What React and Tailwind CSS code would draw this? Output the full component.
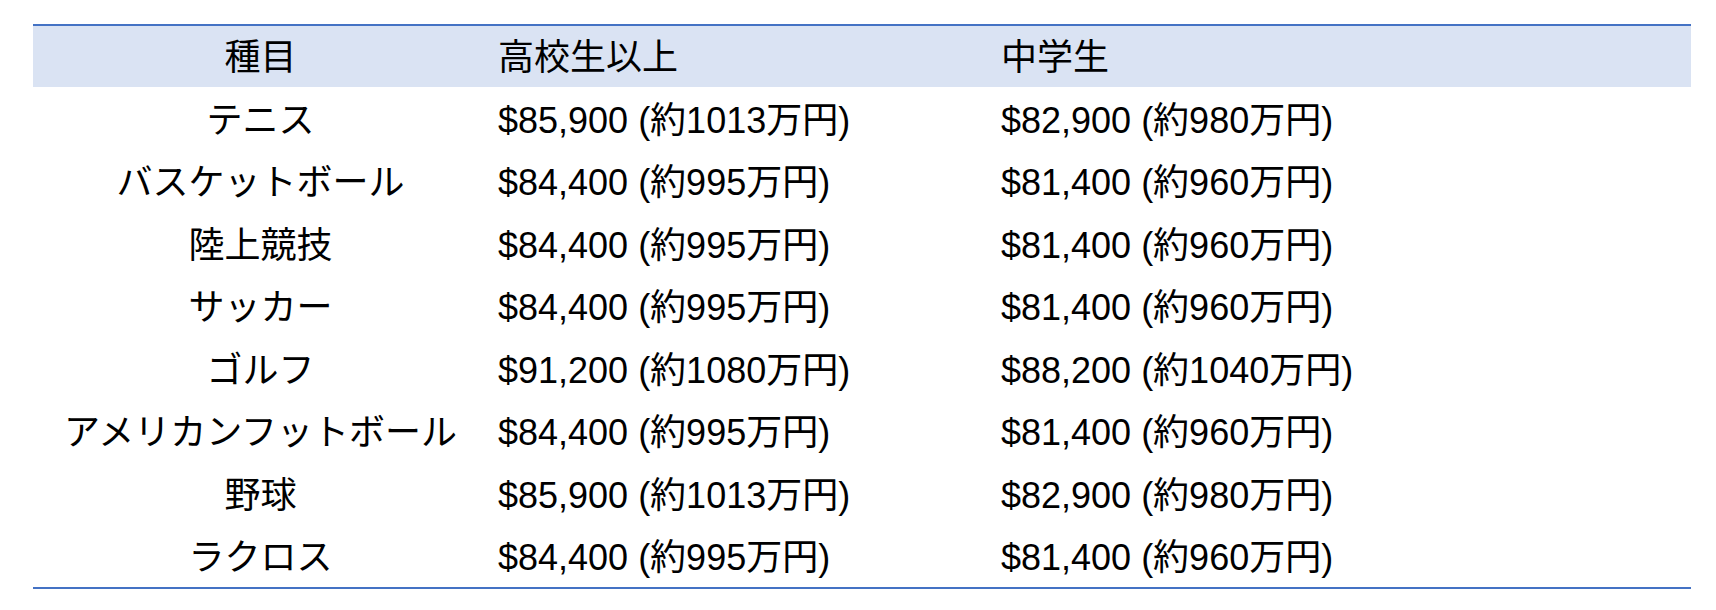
import React from "react";

const rows = [
  ["テニス", "$85,900 (約1013万円)", "$82,900 (約980万円)"],
  ["バスケットボール", "$84,400 (約995万円)", "$81,400 (約960万円)"],
  ["陸上競技", "$84,400 (約995万円)", "$81,400 (約960万円)"],
  ["サッカー", "$84,400 (約995万円)", "$81,400 (約960万円)"],
  ["ゴルフ", "$91,200 (約1080万円)", "$88,200 (約1040万円)"],
  ["アメリカンフットボール", "$84,400 (約995万円)", "$81,400 (約960万円)"],
  ["野球", "$85,900 (約1013万円)", "$82,900 (約980万円)"],
  ["ラクロス", "$84,400 (約995万円)", "$81,400 (約960万円)"],
];

const App = () => {
  return (
    <div className="w-[1716px] h-[610px] bg-white pt-[24px] pl-[33px] font-['Liberation_Sans','Noto_Sans_CJK_JP',sans-serif] text-[36px] leading-none text-black">
      <div className="w-[1658px] border-t-2 border-b-2 border-[#4472c4]">
        <div className="grid grid-cols-[455px_503px_1fr] h-[61px] items-center bg-[#dae3f3] pt-[2px]">
          <div className="text-center">種目</div>
          <div className="pl-[10px]">高校生以上</div>
          <div className="pl-[10px]">中学生</div>
        </div>
        {rows.map((r) => (
          <div
            key={r[0]}
            className="grid grid-cols-[455px_503px_1fr] h-[62.5px] items-center pt-[5px]"
          >
            <div className="text-center">{r[0]}</div>
            <div className="pl-[10px]">{r[1]}</div>
            <div className="pl-[10px]">{r[2]}</div>
          </div>
        ))}
      </div>
    </div>
  );
};

export default App;
